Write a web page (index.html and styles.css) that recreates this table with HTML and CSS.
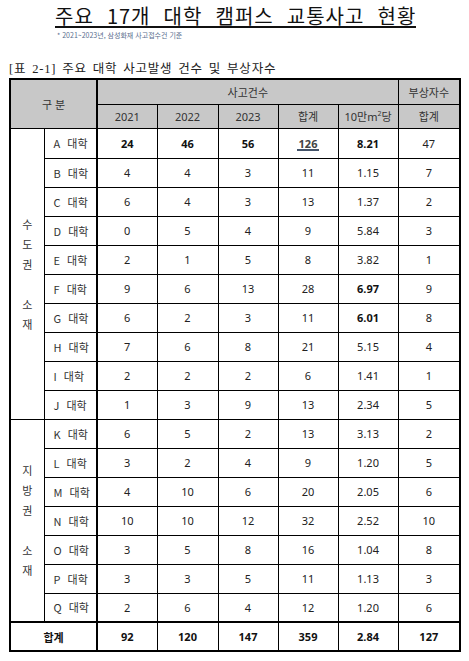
FILE: index.html
```html
<!DOCTYPE html>
<html lang="ko">
<head>
<meta charset="utf-8">
<link rel="stylesheet" href="styles.css">
</head>
<body>
<div class="page">
  <div class="head">
    <h1 class="title">주요 17개 대학 캠퍼스 교통사고 현황</h1>
    <div class="note">* 2021~2023년, 삼성화재 사고접수건 기준</div>
  </div>
  <div class="caption">[표 2-1] 주요 대학 사고발생 건수 및 부상자수</div>
  <table class="tbl">
    <colgroup>
      <col class="c-grp"><col class="c-name"><col class="c-n"><col class="c-n2"><col class="c-n"><col class="c-n"><col class="c-n"><col class="c-last">
    </colgroup>
    <thead>
      <tr class="h1">
        <th colspan="2" rowspan="2" class="sep">구 분</th>
        <th colspan="5">사고건수</th>
        <th>부상자수</th>
      </tr>
      <tr class="h2">
        <th>2021</th><th>2022</th><th>2023</th><th>합계</th><th>10만m<sup>2</sup>당</th><th>합계</th>
      </tr>
    </thead>
    <tbody>
      <tr class="first">
        <td rowspan="10" class="grp"><span>수<br>도<br>권<br><br>소<br>재</span></td>
        <td class="name sep">A 대학</td>
        <td class="b">24</td><td class="b">46</td><td class="b">56</td><td class="b"><span class="mark">126</span></td><td class="b">8.21</td><td>47</td>
      </tr>
      <tr><td class="name sep">B 대학</td><td>4</td><td>4</td><td>3</td><td>11</td><td>1.15</td><td>7</td></tr>
      <tr><td class="name sep">C 대학</td><td>6</td><td>4</td><td>3</td><td>13</td><td>1.37</td><td>2</td></tr>
      <tr><td class="name sep">D 대학</td><td>0</td><td>5</td><td>4</td><td>9</td><td>5.84</td><td>3</td></tr>
      <tr><td class="name sep">E 대학</td><td>2</td><td>1</td><td>5</td><td>8</td><td>3.82</td><td>1</td></tr>
      <tr><td class="name sep">F 대학</td><td>9</td><td>6</td><td>13</td><td>28</td><td class="b">6.97</td><td>9</td></tr>
      <tr><td class="name sep">G 대학</td><td>6</td><td>2</td><td>3</td><td>11</td><td class="b">6.01</td><td>8</td></tr>
      <tr><td class="name sep">H 대학</td><td>7</td><td>6</td><td>8</td><td>21</td><td>5.15</td><td>4</td></tr>
      <tr><td class="name sep">I 대학</td><td>2</td><td>2</td><td>2</td><td>6</td><td>1.41</td><td>1</td></tr>
      <tr><td class="name sep">J 대학</td><td>1</td><td>3</td><td>9</td><td>13</td><td>2.34</td><td>5</td></tr>
      <tr>
        <td rowspan="7" class="grp"><span>지<br>방<br>권<br><br>소<br>재</span></td>
        <td class="name sep">K 대학</td><td>6</td><td>5</td><td>2</td><td>13</td><td>3.13</td><td>2</td>
      </tr>
      <tr><td class="name sep">L 대학</td><td>3</td><td>2</td><td>4</td><td>9</td><td>1.20</td><td>5</td></tr>
      <tr><td class="name sep">M 대학</td><td>4</td><td>10</td><td>6</td><td>20</td><td>2.05</td><td>6</td></tr>
      <tr><td class="name sep">N 대학</td><td>10</td><td>10</td><td>12</td><td>32</td><td>2.52</td><td>10</td></tr>
      <tr><td class="name sep">O 대학</td><td>3</td><td>5</td><td>8</td><td>16</td><td>1.04</td><td>8</td></tr>
      <tr><td class="name sep">P 대학</td><td>3</td><td>3</td><td>5</td><td>11</td><td>1.13</td><td>3</td></tr>
      <tr><td class="name sep">Q 대학</td><td>2</td><td>6</td><td>4</td><td>12</td><td>1.20</td><td>6</td></tr>
    </tbody>
    <tfoot>
      <tr class="total">
        <td colspan="2" class="sep">합계</td>
        <td>92</td><td>120</td><td>147</td><td>359</td><td>2.84</td><td>127</td>
      </tr>
    </tfoot>
  </table>
</div>
</body>
</html>
```

FILE: styles.css
```css
html, body {
  margin: 0;
  padding: 0;
  background: #fff;
}
.page {
  width: 469px;
  padding: 5px 0 0 9px;
  box-sizing: border-box;
}
.head {
  padding-left: 46px;
}
.title {
  margin: 0;
  font-family: "Noto Sans CJK KR", sans-serif;
  font-weight: 400;
  font-size: 20px;
  line-height: 21px;
  letter-spacing: 1px;
  word-spacing: 6.5px;
  color: #111;
  display: inline-block;
  border-bottom: 2px solid #111;
  white-space: nowrap;
}
.note {
  margin-top: 3px;
  padding-left: 2px;
  font-family: "Noto Sans CJK KR", sans-serif;
  font-size: 7px;
  line-height: 9px;
  color: #5a6e8e;
}
.caption {
  margin-top: 21px;
  font-family: "Liberation Serif", "Noto Sans CJK KR", serif;
  font-size: 12.5px;
  line-height: 16px;
  color: #222;
  letter-spacing: 0.8px;
  word-spacing: 2px;
}
.tbl {
  margin-top: 1px;
  border-collapse: collapse;
  border: 2px solid #000;
  table-layout: fixed;
  width: 450px;
  font-family: "Noto Sans", "Noto Sans CJK KR", sans-serif;
  font-size: 11px;
  color: #222;
}
.c-grp { width: 34px; }
.c-name { width: 53px; }
.c-n { width: 60px; }
.c-n2 { width: 61px; }
.c-last { width: 62px; }
.tbl th, .tbl td {
  border: 1px solid #000;
  padding: 0;
  text-align: center;
  vertical-align: middle;
}
.tbl th {
  background: #c8c8c8;
  font-weight: 400;
  color: #333;
}
.tbl th sup {
  font-size: 7px;
  line-height: 0;
}
.h1 { height: 25px; }
.h2 { height: 24px; }
.tbl tbody tr { height: 29px; }
.tbl tbody tr.first { height: 30px; }
.tbl .sep { border-right: 2px solid #000; }
.tbl .name {
  text-align: left;
  padding-left: 9px;
  font-family: "Noto Sans CJK KR", sans-serif;
  font-size: 11px;
  word-spacing: 4px;
  color: #333;
}
.tbl .grp {
  font-family: "Noto Sans CJK KR", sans-serif;
  font-size: 11px;
  line-height: 20px;
  color: #333;
}
.tbl .b { font-weight: 700; color: #111; }
.mark {
  display: inline-block;
  line-height: 10px;
  padding: 0 2px;
  color: #444;
  border-bottom: 2px solid #44546a;
}
.total { height: 29px; }
.total td {
  border-top: 2px solid #000;
  font-weight: 700;
  color: #111;
}
.total td:first-child {
  font-family: "Noto Sans CJK KR", sans-serif;
}
```
